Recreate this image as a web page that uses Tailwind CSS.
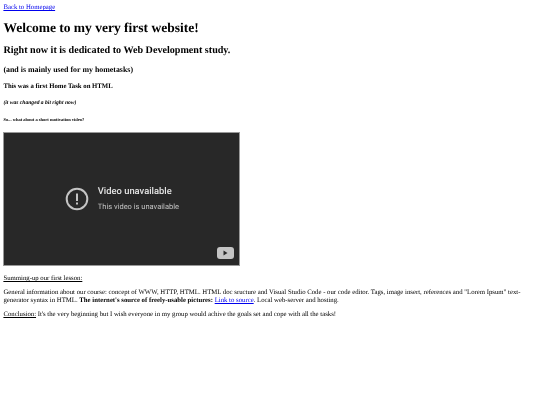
<!DOCTYPE html>
<html><head><meta charset="utf-8"><title>First website</title>
<script src="https://cdn.jsdelivr.net/npm/@tailwindcss/browser@4"></script></head>
<body class="bg-white">
<main class="blur-[0.4px] px-[3.4px] pt-[4.4px] font-['Liberation_Serif',serif] text-[6.75px] leading-[1.15] text-black [text-rendering:geometricPrecision]">
<a href="#" class="text-[#0000ee] underline">Back to Homepage</a>
<h1 class="text-[13.5px] font-bold mt-[8px] mb-[9px]">Welcome to my very first website!</h1>
<h2 class="text-[10.125px] font-bold my-[8.4px]">Right now it is dedicated to Web Development study.</h2>
<h3 class="text-[7.9px] font-bold my-[7.9px]">(and is mainly used for my hometasks)</h3>
<h4 class="text-[6.75px] font-bold my-[9px]">This was a first Home Task on HTML</h4>
<h5 class="text-[5.6px] font-bold italic my-[9.4px]">(it was changed a bit right now)</h5>
<h6 class="text-[4.5px] font-bold mt-[10.5px] mb-[10px]">So... what about a short motivation video?</h6>
<div class="relative w-[236.5px] h-[133.5px] bg-[#282828] border border-[#999] flex items-center justify-center gap-[7.5px] font-['Roboto',sans-serif]">
  <svg class="w-[26px] h-[26px]" viewBox="0 0 26 26" fill="none">
    <circle cx="13" cy="13" r="10.3" stroke="#c4c4c4" stroke-width="2"/>
    <rect x="12" y="7.5" width="2" height="7.5" fill="#c4c4c4"/>
    <rect x="12" y="16.5" width="2" height="2" fill="#c4c4c4"/>
  </svg>
  <div class="flex flex-col gap-[3.8px]">
    <div class="text-[9.4px] font-medium leading-[12px] text-[#e4e4e4]">Video unavailable</div>
    <div class="text-[7.5px] leading-[10px] text-[#c4c4c4]">This video is unavailable</div>
  </div>
  <svg class="absolute right-[5px] bottom-[6px] w-[17px] h-[12px]" viewBox="0 0 17 12">
    <rect width="17" height="12" rx="3" fill="#c4c4c4"/>
    <path d="M6.5 3.5 L10.5 6 L6.5 8.5 Z" fill="#282828"/>
  </svg>
</div>
<p class="mt-[9.5px] underline">Summing-up our first lesson:</p>
<p class="mt-[6.5px]">General information about our course: concept of WWW, HTTP, HTML. HTML doc sructure and Visual Studio Code - our code editor. Tags, image insert, references and "Lorem Ipsum" text-generator syntax in HTML. <b>The internet's source of freely-usable pictures:</b> <a href="#" class="text-[#0000ee] underline">Link to source</a>. Local web-server and hosting.</p>
<p class="mt-[6.25px]"><span class="underline">Conclusion:</span> It's the very beginning but I wish everyone in my group would achive the goals set and cope with all the tasks!</p>
</main>
</body></html>
